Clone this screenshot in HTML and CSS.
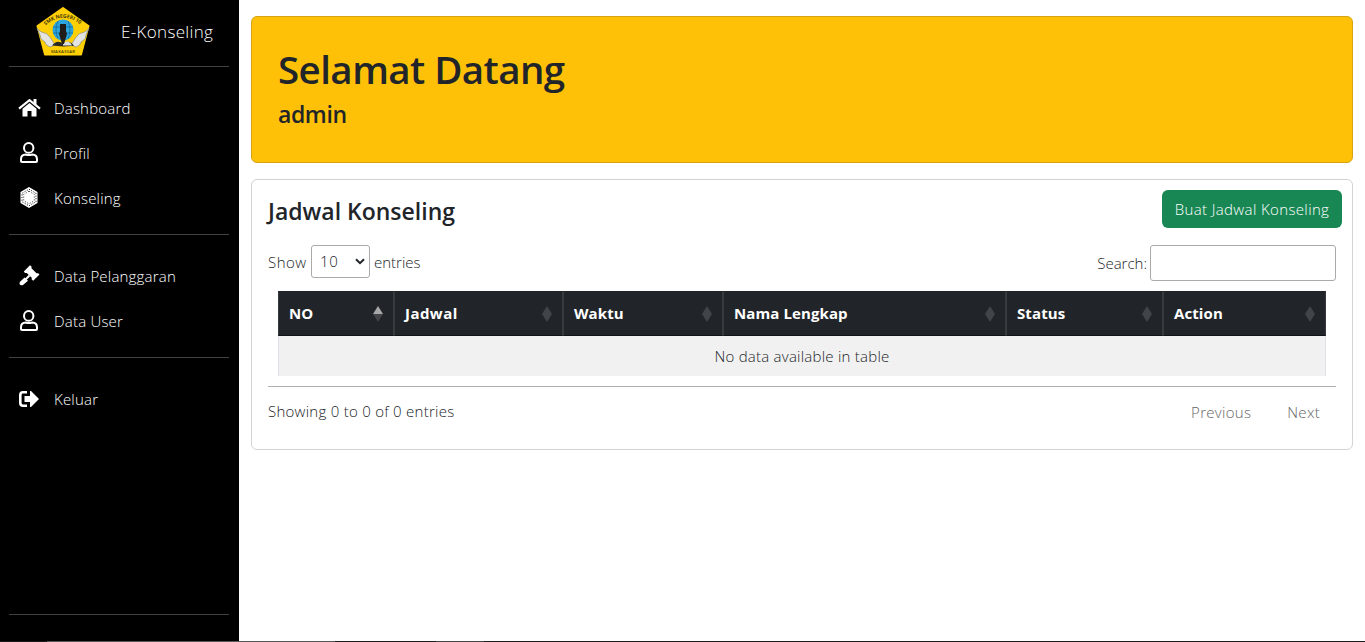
FILE: index.html
```html
<!DOCTYPE html>
<html lang="id">
<head>
<meta charset="utf-8">
<title>E-Konseling</title>
<link rel="stylesheet" href="styles.css">
</head>
<body>
<svg class="defs" width="0" height="0" aria-hidden="true">
  <symbol id="user" viewBox="0 0 18 21"><ellipse cx="8.700" cy="5.900" rx="4.700" ry="4.900" fill="none" stroke="#fff" stroke-width="2"/><path d="M5.800 12.500C2.500 12.700 1 14.600 1 17.200V19q0 1 1 1H16q1 0 1-1v-1.800c0-2.600-1.500-4.500-4.800-4.700q-3.200 1.200-6.400 0z" fill="none" stroke="#fff" stroke-width="2"/></symbol>
  <symbol id="sort" viewBox="0 0 10 16"><path class="up" d="M5 0 10 8H0z"/><path class="down" d="M0 8H10L5 16z"/></symbol>
</svg>
<div class="app">
  <aside class="sidebar">
    <div class="brand">
      <svg class="logo" viewBox="0 0 54 49" width="54" height="49">
        <path d="M27 1 52.500 19 45 47.500H9L1.500 19z" fill="#ffd005" stroke="#ffd005" stroke-width="2" stroke-linejoin="round"/>
        <path id="arc" d="M9.500 18.500Q27 3 45.500 18.500" fill="none"/>
        <text font-size="5.200" font-weight="700" class="seal"><textPath href="#arc" textLength="38">SMK NEGERI 10</textPath></text>
        <circle cx="27" cy="23" r="10.500" fill="#2aa5dd"/>
        <path d="M17 20H37M17 26H37M22 14Q18 23 22 32M32 14Q36 23 32 32" fill="none" stroke="#126c9d" stroke-width=".8"/>
        <path d="M1 21C5 27 10 25 12 28 15 31 17 35 19 38L14 40Q9 38 9 35L5 32 4 28z" fill="#e3e4df" stroke="#8b8d83" stroke-width=".7"/>
        <path d="M53 21C49 27 44 25 42 28 39 31 37 35 35 38L40 40Q45 38 45 35L49 32 50 28z" fill="#e3e4df" stroke="#8b8d83" stroke-width=".7"/>
        <path d="M16 38.500Q21 32 27 36.500 33 32 38 38.500L36 39 27 39.500z" fill="#292a26"/>
        <path d="M27 36Q33 32 36 38.500L27 38.500z" fill="#ddd"/>
        <path d="M24 17H30V24L31 27 28 37H26L23 27 24 24z" fill="#211d1b"/>
        <text x="15" y="46" textLength="24" font-size="4.200" font-weight="600" class="seal">MAKASSAR</text>
      </svg>
      <span class="brand-name">E-Konseling</span>
    </div>
    <hr>
    <nav class="menu first">
      <a><svg width="24" height="18" viewBox="0 0 24 18"><path d="M1 9.700 11.500 1.200 22 9.700" fill="none" stroke="#fff" stroke-width="2.200"/><path d="M15.500 0h3v6l-3-2.500zM4.500 9.800 11.500 4l7 5.800V17.500H13.500V12H9.500v5.500H4.500z" fill="#fff"/></svg><span>Dashboard</span></a>
      <a><svg width="18" height="21"><use href="#user"/></svg><span>Profil</span></a>
      <a><svg width="18" height="21" viewBox="0 0 18 21"><path d="M9 0 17.500 5v11L9 21 .5 16V5z" fill="#fff"/><path d="M9 2.200 16 6.300v8.400L9 18.800 2 14.700V6.300z" fill="none" stroke="#000" stroke-width="1" stroke-dasharray="1 1.600"/><path d="M9 4.200 14.300 7.300v6.400L9 16.800 3.700 13.700V7.300z" fill="none" stroke="#000" stroke-width=".8" stroke-dasharray="1 1.800"/></svg><span>Konseling</span></a>
    </nav>
    <hr>
    <nav class="menu second">
      <a><svg width="21" height="21" viewBox="0 0 21 21"><path d="M11 0 12.500 1.300V3L17.500 8h1.700l1.300 1.200-6.300 6.200-1.500-1.300v-1.700L7.700 7.600H6L4.800 6.300z" transform="translate(0 .3)" fill="#fff"/><path d="M10.500 10.500 6.500 14.500" stroke="#fff" stroke-width="2"/><path d="M.8 17 5.500 12.500 9 15.700 4 20q-2.500 1-3.500-1z" fill="#fff"/></svg><span>Data Pelanggaran</span></a>
      <a><svg width="18" height="21"><use href="#user"/></svg><span>Data User</span></a>
    </nav>
    <hr>
    <nav class="menu third">
      <a><svg width="20" height="16" viewBox="0 0 20 16"><path d="M8 1.300H4Q1.300 1.300 1.300 4v8q0 2.700 2.700 2.700H8" fill="none" stroke="#fff" stroke-width="2.600"/><path d="M5.500 5H11V0h1l8 8-8 8h-1V11H5.500z" fill="#fff"/></svg><span>Keluar</span></a>
    </nav>
    <hr class="last">
  </aside>
  <main class="content">
    <section class="welcome"><h1>Selamat Datang</h1><h4>admin</h4></section>
    <section class="card">
      <div class="card-head"><h4>Jadwal Konseling</h4><button class="create">Buat Jadwal Konseling</button></div>
      <div class="tools">
        <div class="length"><span class="show">Show</span><span class="select"><span>10</span><svg width="10" height="7" viewBox="0 0 10 7"><path d="M1 1.200 5 5.200 9 1.200" fill="none" stroke="#212529" stroke-width="2"/></svg></span><span class="entries">entries</span></div>
        <label class="search"><span>Search:</span><input type="text"></label>
      </div>
      <table>
        <colgroup><col class="c1"><col class="c2"><col class="c3"><col class="c4"><col class="c5"><col class="c6"></colgroup>
        <thead><tr>
          <th><div><span>NO</span><svg class="sort active"><use href="#sort"/></svg></div></th>
          <th><div><span class="wide">Jadwal</span><svg class="sort"><use href="#sort"/></svg></div></th>
          <th><div><span>Waktu</span><svg class="sort"><use href="#sort"/></svg></div></th>
          <th><div><span>Nama Lengkap</span><svg class="sort"><use href="#sort"/></svg></div></th>
          <th><div><span>Status</span><svg class="sort"><use href="#sort"/></svg></div></th>
          <th><div><span>Action</span><svg class="sort"><use href="#sort"/></svg></div></th>
        </tr></thead>
        <tbody><tr><td colspan="6">No data available in table</td></tr></tbody>
      </table>
      <div class="foot"><span class="info">Showing 0 to 0 of 0 entries</span><div class="pages"><span class="prev">Previous</span><span class="next">Next</span></div></div>
    </section>
  </main>
</div>
<div class="edge"></div>
</body>
</html>
```
FILE: styles.css
```css
* { box-sizing: border-box; }
body { margin: 0; height: 642px; overflow: hidden; background: #fff; color: #212529; font: 300 15px/24px "Open Sans", "Noto Sans", sans-serif; }
.defs { position: absolute; }
.app { display: flex; height: 641px; }
.sidebar { width: 239px; background: #000; color: #fff; padding: 0 10px 0 9px; flex: none; display: flex; flex-direction: column; }
.brand { height: 66px; display: flex; padding: 7px 0 0 27px; }
.logo { flex: none; }
.seal { font-family: "Open Sans", sans-serif; fill: #493c0b; }
.brand-name { font-size: 17px; margin: 13px 0 0 31px; white-space: nowrap; letter-spacing: .33px; }
hr { border: 0; height: 1px; width: 100%; background: #404040; margin: 0; flex: none; }
.menu { display: flex; flex-direction: column; padding-top: 18px; letter-spacing: .2px; }
.menu a { height: 45px; display: flex; align-items: center; padding-left: 11px; }
.menu svg { flex: none; margin-right: 16px; }
.menu svg[width="24"] { margin: 0 12px 0 -2px; }
.menu svg[width="21"] { margin: 0 14px 0 -1px; }
.menu svg[width="20"] { margin: 0 15px 0 -1px; }
.first { height: 167px; }
.second { height: 122px; }
.third { height: 64px; }
.last { margin-top: 192px; }
.content { flex: 1; padding: 16px 12px 0; }
h1, h4 { margin: 0; font-weight: 600; }
.welcome { height: 147px; border: 1px solid #d6a412; border-radius: 6px; background: #ffc107; padding: 28px 26px; }
h1 { font-size: 38.5px; line-height: 48px; letter-spacing: -.57px; }
h4 { font-size: 23px; line-height: 29px; }
.welcome h4 { margin-top: 7px; letter-spacing: -.4px; }
.card { height: 271px; margin-top: 16px; border: 1px solid #d3d3d4; border-radius: 6px; padding: 10px 16px 0; }
.card-head { display: flex; justify-content: space-between; height: 55px; margin-right: -6px; }
.card-head h4 { margin-top: 7px; }
.create { width: 180px; height: 38px; border: 0; border-radius: 6px; background: #198754; color: #fff; font: inherit; padding: 0; white-space: nowrap; letter-spacing: .37px; }
.tools { display: flex; justify-content: space-between; height: 46px; }
.length { display: flex; height: 33px; line-height: 35px; }
.show { width: 43px; letter-spacing: .5px; }
.select { width: 59px; height: 33px; border: 1px solid #aaa; border-radius: 3px; display: flex; align-items: center; justify-content: space-between; padding: 0 4px 0 8px; margin-right: 4px; letter-spacing: .6px; }
.search { display: flex; line-height: 36px; gap: 3px; }
.search input { width: 186px; height: 36px; border: 1px solid #aaa; border-radius: 3px; padding: 5px; }
table { width: 1048px; margin: 0 10px; border-collapse: separate; border-spacing: 0; table-layout: fixed; }
.c1 { width: 116px; } .c2 { width: 169px; } .c3 { width: 160px; } .c4 { width: 283px; } .c5 { width: 157px; } .c6 { width: 163px; }
th { height: 45px; padding: 0 10px; background: #212529; color: #fff; text-align: left; font-weight: 700; border: 1px solid #373b3e; border-top-color: #212529; border-bottom-color: #111315; }
th div { display: flex; align-items: center; justify-content: space-between; }
th span { padding-bottom: 2px; letter-spacing: .1px; }
th .wide { letter-spacing: .45px; }
.sort { width: 10px; height: 16px; fill: #414449; color: #414449; }
.sort.active { color: #a6a8a9; }
.up { fill: currentColor; }
td { height: 40px; padding: 0; text-align: center; background: #f1f1f1; border: 1px solid #dee2e6; border-width: 0 1px; letter-spacing: .24px; }
.foot { margin-top: 10px; border-top: 1px solid #b0b0b0; display: flex; justify-content: space-between; padding-top: 12px; }
.info { letter-spacing: .26px; }
.pages { display: flex; gap: 36px; padding-right: 16px; color: #666; padding-top: 1px; letter-spacing: .3px; }
.edge { height: 1px; background: linear-gradient(to right, #1a1a1a 47px, #555 47px, #555 335px, #1a1a1a 335px, #1a1a1a 436px, #444 436px, #444 484px, #1a1a1a 484px); }
```
